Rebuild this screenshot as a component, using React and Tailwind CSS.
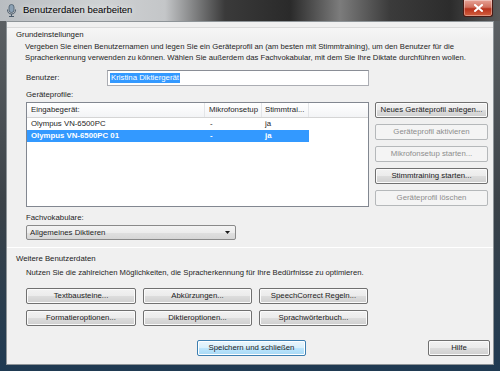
import React from "react";

const font = { fontFamily: '"Liberation Sans", Arial, sans-serif' };

function Btn({ children, w, disabled, def, className = "" }) {
  const base =
    "flex items-center justify-center rounded-[2px] border text-[7.8px] leading-none whitespace-nowrap ";
  const style = disabled
    ? "border-[#b5b8ba] bg-[#f4f4f4] text-[#8d8d8d]"
    : def
    ? "border-[#3c7fb1] bg-[linear-gradient(#eaf6fd_0%,#d9f0fc_50%,#bee6fd_50%,#a7d9f5_100%)] text-[#1a1a1a] shadow-[inset_0_0_0_1px_#ffffff]"
    : "border-[#707070] bg-[linear-gradient(#f2f2f2_0%,#ebebeb_50%,#dddddd_50%,#cfcfcf_100%)] text-[#1a1a1a] shadow-[inset_0_0_0_1px_#fbfbfb]";
  return <div className={base + style + " " + w + " " + className}>{children}</div>;
}

function SectionHeader({ children, className = "" }) {
  return (
    <div
      className={
        "h-[13px] border-t border-[#dadada] bg-[linear-gradient(#f6f6f6,#f0f0f0)] pl-[9px] text-[7.8px] leading-[13px] text-[#1a1a1a] " +
        className
      }
    >
      {children}
    </div>
  );
}

export default function App() {
  return (
    <div
      className="relative h-[371px] w-[500px] overflow-hidden bg-[linear-gradient(#5f6366_0%,#3b4248_55%,#1f3a52_100%)]"
      style={font}
    >
      {/* title bar */}
      <div className="flex h-[21px] items-center bg-[linear-gradient(90deg,#b9bdc1_0%,#cfd2d4_20%,#c4c6c8_33%,#3a3a3a_45%,#2a2a2a_58%,#7c7c7c_68%,#3b3b3b_78%,#2c2c2c_90%,#5a5a5a_100%)] pl-[6px]">
        <svg width="11" height="13" viewBox="0 0 11 13">
          <rect x="3" y="0.5" width="5" height="8" rx="2.5" fill="#8aa0b4" stroke="#4a5a6a" strokeWidth="0.8" />
          <path d="M1.5 5.5 Q1.5 10 5.5 10 Q9.5 10 9.5 5.5" fill="none" stroke="#4a5a6a" strokeWidth="1" />
          <path d="M5.5 10 V12.5 M3 12.5 H8" stroke="#4a5a6a" strokeWidth="1" />
        </svg>
        <div className="ml-[6px] text-[9.5px] text-black [text-shadow:0_0_6px_#ffffff]">
          Benutzerdaten bearbeiten
        </div>
        <div className="flex-1" />
        <div className="mr-[7px] mb-[3px] flex h-[17px] w-[30px] items-center justify-center self-start rounded-b-[3px] border border-t-0 border-[#4a1a14] bg-[linear-gradient(#e8a296_0%,#d0705e_45%,#b8321c_55%,#d2603f_100%)] shadow-[inset_0_0_0_1px_rgba(255,255,255,0.35)]">
          <svg width="9" height="8" viewBox="0 0 9 8">
            <path d="M1 1 L8 7 M8 1 L1 7" stroke="#ffffff" strokeWidth="2" strokeLinecap="square" />
          </svg>
        </div>
      </div>

      {/* client area */}
      <div className="ml-[6px] h-[344px] w-[488px] border border-[#8e9498] bg-[#f0f0f0]">
        <div className="h-[5px]" />
        <SectionHeader>Grundeinstellungen</SectionHeader>

        <div className="mt-[1px] pl-[18px] text-[7.7px] leading-[11px] text-[#1e1e1e]">
          <div>
            Vergeben Sie einen Benutzernamen und legen Sie ein Geräteprofil an (am besten mit Stimmtraining), um den Benutzer für die
          </div>
          <div>
            Spracherkennung verwenden zu können. Wählen Sie außerdem das Fachvokabular, mit dem Sie Ihre Diktate durchführen wollen.
          </div>
        </div>

        {/* Benutzer */}
        <div className="mt-[7px] flex h-[16px] items-center pl-[19px]">
          <div className="w-[81px] text-[7.8px] text-[#1e1e1e]">Benutzer:</div>
          <div className="flex h-[16px] w-[262px] items-center border border-[#abadb3] border-t-[#8a8e96] bg-white pl-[2px]">
            <span className="bg-[#3399ff] px-[1px] text-[7.8px] leading-[10px] text-white">Kristina Diktiergerät</span>
          </div>
        </div>

        <div className="mt-[3px] pl-[19px] text-[7.8px] leading-[11px] text-[#1e1e1e]">Geräteprofile:</div>

        <div className="mt-[2px] flex pl-[19px]">
          {/* list view */}
          <div className="h-[105px] w-[343px] border border-[#828790] bg-white">
            <div className="flex h-[15px] border-b border-[#d5d5d5] bg-[linear-gradient(#ffffff,#f3f4f6)] text-[7.8px] leading-[14px] text-[#1e1e1e]">
              <div className="w-[178px] border-r border-[#e3e5e8] pl-[4px]">Eingabegerät:</div>
              <div className="w-[57px] border-r border-[#e3e5e8] pl-[4px]">Mikrofonsetup</div>
              <div className="w-[47px] border-r border-[#e3e5e8] pl-[3px]">Stimmtrai...</div>
              <div className="flex-1" />
            </div>
            <div className="flex h-[12px] text-[7.8px] leading-[12px] text-[#1e1e1e]">
              <div className="w-[178px] pl-[4px]">Olympus VN-6500PC</div>
              <div className="w-[57px] pl-[5px]">-</div>
              <div className="w-[47px] pl-[3px]">ja</div>
            </div>
            <div className="flex h-[12px] text-[7.8px] font-bold leading-[12px] text-white">
              <div className="flex w-[282px] bg-[#3399ff]">
                <div className="w-[178px] pl-[4px]">Olympus VN-6500PC 01</div>
                <div className="w-[57px] pl-[5px]">-</div>
                <div className="w-[47px] pl-[3px]">ja</div>
              </div>
            </div>
          </div>

          {/* right buttons */}
          <div className="ml-[6px] flex flex-col gap-[6px]">
            <Btn w="w-[113px] h-[16px]">Neues Geräteprofil anlegen...</Btn>
            <Btn w="w-[113px] h-[16px]" disabled>Geräteprofil aktivieren</Btn>
            <Btn w="w-[113px] h-[16px]" disabled>Mikrofonsetup starten...</Btn>
            <Btn w="w-[113px] h-[16px]">Stimmtraining starten...</Btn>
            <Btn w="w-[113px] h-[16px]" disabled>Geräteprofil löschen</Btn>
          </div>
        </div>

        <div className="mt-[5px] pl-[19px] text-[7.8px] leading-[11px] text-[#1e1e1e]">Fachvokabulare:</div>
        <div className="mt-[2px] pl-[19px]">
          <div className="flex h-[15px] w-[210px] items-center rounded-[2px] border border-[#8a8a8a] bg-[linear-gradient(#f4f4f4_0%,#ececec_50%,#e0e0e0_50%,#d6d6d6_100%)] pl-[3px] pr-[5px] text-[7.8px] text-[#1e1e1e]">
            <span className="flex-1">Allgemeines Diktieren</span>
            <svg width="5" height="3" viewBox="0 0 5 3">
              <path d="M0 0 H5 L2.5 3 Z" fill="#1a1a1a" />
            </svg>
          </div>
        </div>

        <div className="mt-[7px] border-b border-white" />
        <div className="h-[4px]" />
        <SectionHeader className="border-t-0 bg-none">Weitere Benutzerdaten</SectionHeader>
        <div className="mt-[2px] pl-[19px] text-[7.7px] leading-[11px] text-[#1e1e1e]">
          Nutzen Sie die zahlreichen Möglichkeiten, die Spracherkennung für Ihre Bedürfnisse zu optimieren.
        </div>

        <div className="mt-[10px] grid w-[362px] grid-cols-[110px_109px_109px] gap-x-[7px] gap-y-[6px] pl-[19px]">
          <Btn w="h-[16px]">Textbausteine...</Btn>
          <Btn w="h-[16px]">Abkürzungen...</Btn>
          <Btn w="h-[16px]">SpeechCorrect Regeln...</Btn>
          <Btn w="h-[16px]">Formatieroptionen...</Btn>
          <Btn w="h-[16px]">Diktieroptionen...</Btn>
          <Btn w="h-[16px]">Sprachwörterbuch...</Btn>
        </div>

        <div className="mt-[14px] flex pl-[190px]">
          <Btn w="w-[109px] h-[16px]" def>Speichern und schließen</Btn>
          <div className="ml-[122px]">
            <Btn w="w-[62px] h-[16px]">Hilfe</Btn>
          </div>
        </div>
      </div>
    </div>
  );
}
